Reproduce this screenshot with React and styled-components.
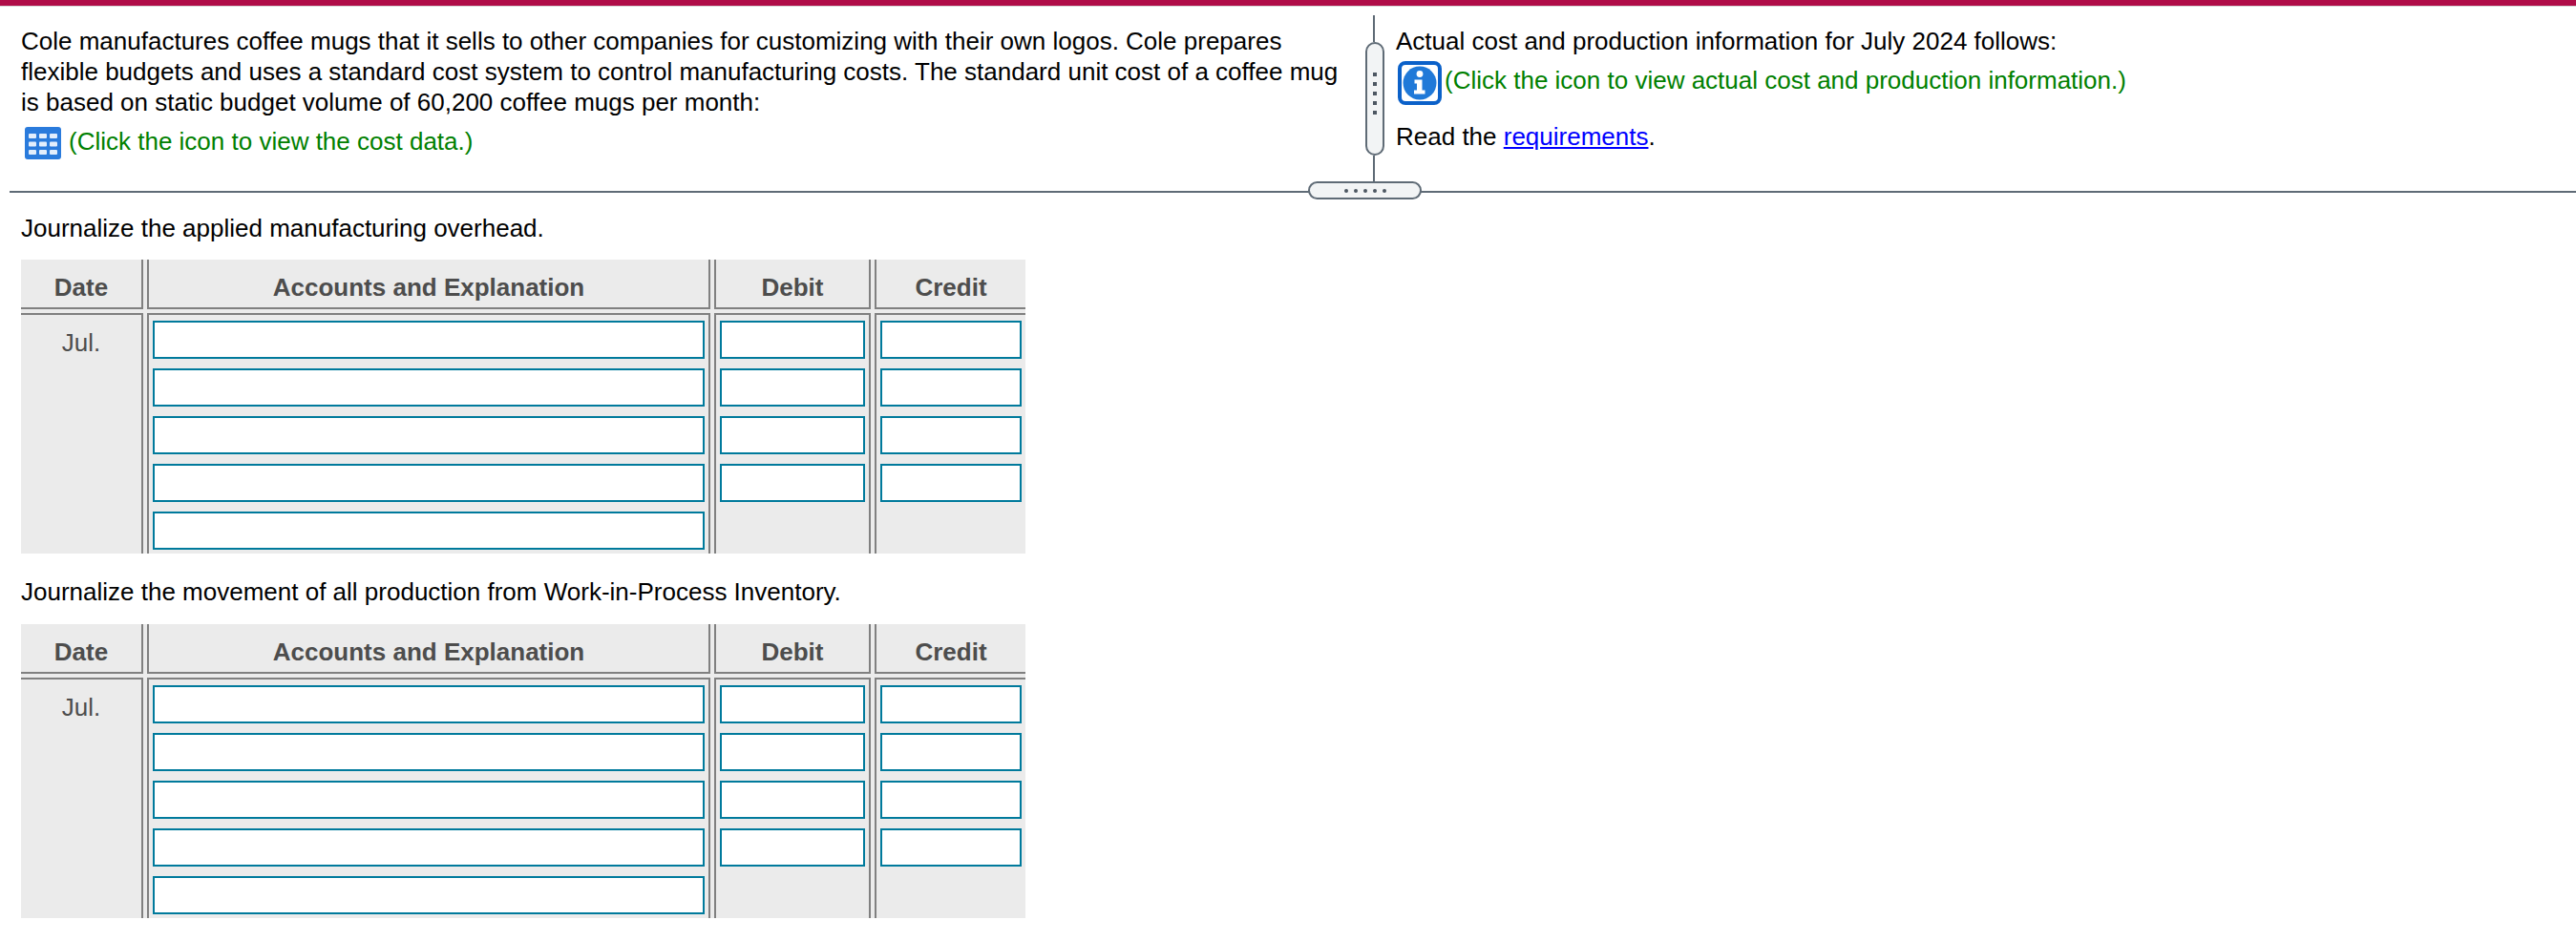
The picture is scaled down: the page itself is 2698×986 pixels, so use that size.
import React from "react";
import styled, { createGlobalStyle } from "styled-components";

const GlobalStyle = createGlobalStyle`
  html, body {
    margin: 0;
    padding: 0;
    background: #fff;
  }
  body {
    font-family: "Liberation Sans", Arial, sans-serif;
    font-size: 26px;
    line-height: 32px;
    color: #000;
  }
`;

const TopBar = styled.div`
  height: 6px;
  background: #b00d48;
  border-bottom: 1px solid #d8d8d8;
`;

const Split = styled.div`
  display: flex;
  height: 193px;
`;

const LeftPane = styled.div`
  width: 1429px;
  padding-left: 22px;
  box-sizing: border-box;
  flex: none;
`;

const LeftText = styled.p`
  margin: 20px 0 0;
  width: 1400px;
`;

const Note = styled.div`
  display: flex;
  align-items: flex-start;
  color: #008000;
`;

const CostNote = styled(Note)`
  margin-top: 9px;
  margin-left: 4px;
  gap: 8px;
`;

const NoteText = styled.span`
  padding-top: ${(p) => p.$top || 0}px;
`;

const IconSvg = styled.svg`
  flex: none;
  margin-top: ${(p) => p.$top || 0}px;
  filter: blur(0.4px);
`;

const Splitter = styled.div`
  flex: none;
  width: 22px;
  margin-right: 11px;
  padding-top: 9px;
  display: flex;
  flex-direction: column;
  align-items: center;
`;

const SplitLine = styled.div`
  width: 2px;
  height: ${(p) => p.$h}px;
  background: #5f6b76;
  margin-right: 2px;
`;

const SplitHandle = styled.div`
  width: 20px;
  height: 119px;
  box-sizing: border-box;
  border: 2px solid #5f6b76;
  border-radius: 10px;
  background: #f2f4f5;
  display: flex;
  flex-direction: column;
  align-items: center;
  gap: 6px;
  padding-top: 30px;
`;

const SquareDot = styled.span`
  width: 4px;
  height: 4px;
  background: #4d5762;
`;

const RightPane = styled.div`
  padding-top: 20px;
`;

const InfoNote = styled(Note)`
  margin-top: 5px;
  margin-left: 2px;
  gap: 3px;
`;

const ReadLine = styled.div`
  margin-top: 17px;
`;

const Link = styled.a`
  color: #0000ff;
  text-decoration: underline;
`;

const HRule = styled.div`
  position: relative;
  height: 2px;
  margin-left: 10px;
  background: #5f6b76;
`;

const RuleHandle = styled.div`
  position: absolute;
  left: 1360px;
  top: -10px;
  width: 119px;
  height: 19px;
  box-sizing: border-box;
  border: 2px solid #5f6b76;
  border-radius: 10px;
  background: #f2f4f5;
  display: flex;
  justify-content: center;
  align-items: center;
  gap: 6px;
`;

const RoundDot = styled.span`
  width: 4px;
  height: 4px;
  border-radius: 50%;
  background: #4d5762;
`;

const Section = styled.section`
  padding-left: 22px;
  width: 1052px;
`;

const Heading = styled.div`
  white-space: nowrap;
  margin: ${(p) => p.$top}px 0 ${(p) => p.$bottom}px;
`;

const Journal = styled.div`
  display: grid;
  grid-template-columns: 128px 590px 164px 158px;
  grid-template-rows: 52px 252px;
  gap: 4px;
  background: #ebebeb;
  color: #4d4d4d;
`;

const HeadCell = styled.div`
  box-sizing: border-box;
  border-bottom: 2px solid #808080;
  border-left: ${(p) => (p.$first ? 0 : 2)}px solid #808080;
  border-right: ${(p) => (p.$last ? 0 : 2)}px solid #808080;
  font-weight: bold;
  text-align: center;
  padding-top: 13px;
`;

const BodyCell = styled.div`
  box-sizing: border-box;
  border-top: 2px solid #808080;
  border-left: ${(p) => (p.$first ? 0 : 2)}px solid #808080;
  border-right: ${(p) => (p.$last ? 0 : 2)}px solid #808080;
  padding: 6px 4px 4px;
  display: flex;
  flex-direction: column;
  gap: 10px;
`;

const DateText = styled.div`
  text-align: center;
  padding-top: 7px;
`;

const EntryInput = styled.input`
  display: block;
  box-sizing: border-box;
  width: 100%;
  height: 40px;
  margin: 0;
  padding: 0 4px;
  border: 2px solid #007a9c;
  border-radius: 0;
  background: #fff;
  outline: none;
  font: inherit;
`;

function GridIcon() {
  const cells = [];
  [0, 1, 2].forEach((r) =>
    [0, 1, 2].forEach((c) =>
      cells.push(
        <rect key={r + "-" + c} x={4 + c * 11} y={7 + r * 8.5} width="8" height="5" rx="1" fill="#e3eefc" />
      )
    )
  );
  return (
    <IconSvg $top={1} width="38" height="34" viewBox="0 0 38 34">
      <rect width="38" height="34" rx="3" fill="#2a7bdc" />
      {cells}
    </IconSvg>
  );
}

function InfoIcon() {
  return (
    <IconSvg width="46" height="46" viewBox="0 0 46 46">
      <rect x="2" y="2" width="42" height="42" rx="6" fill="#fff" stroke="#0b61c9" strokeWidth="4" />
      <circle cx="23" cy="23" r="17.5" fill="#2079d8" />
      <circle cx="23" cy="13.5" r="3.4" fill="#fff" />
      <path d="M17.500 19.500h8v11h3v4h-11.500v-4h3v-7h-2.500z" fill="#fff" />
    </IconSvg>
  );
}

function JournalTable() {
  const rows = [0, 1, 2, 3];
  return (
    <Journal>
      <HeadCell $first>Date</HeadCell>
      <HeadCell>Accounts and Explanation</HeadCell>
      <HeadCell>Debit</HeadCell>
      <HeadCell $last>Credit</HeadCell>
      <BodyCell $first>
        <DateText>Jul.</DateText>
      </BodyCell>
      <BodyCell>
        {[...rows, 4].map((r) => (
          <EntryInput key={r} />
        ))}
      </BodyCell>
      <BodyCell>
        {rows.map((r) => (
          <EntryInput key={r} />
        ))}
      </BodyCell>
      <BodyCell $last>
        {rows.map((r) => (
          <EntryInput key={r} />
        ))}
      </BodyCell>
    </Journal>
  );
}

export default function App() {
  return (
    <>
      <GlobalStyle />
      <TopBar />
      <Split>
        <LeftPane>
          <LeftText>
            Cole manufactures coffee mugs that it sells to other companies for customizing with their own logos. Cole
            prepares flexible budgets and uses a standard cost system to control manufacturing costs. The standard unit
            cost of a coffee mug is based on static budget volume of 60,200 coffee mugs per month:
          </LeftText>
          <CostNote>
            <GridIcon />
            <NoteText>(Click the icon to view the cost data.)</NoteText>
          </CostNote>
        </LeftPane>
        <Splitter>
          <SplitLine $h={28} />
          <SplitHandle>
            <SquareDot />
            <SquareDot />
            <SquareDot />
            <SquareDot />
            <SquareDot />
          </SplitHandle>
          <SplitLine $h={27} />
        </Splitter>
        <RightPane>
          <div>Actual cost and production information for July 2024 follows:</div>
          <InfoNote>
            <InfoIcon />
            <NoteText $top={4}>(Click the icon to view actual cost and production information.)</NoteText>
          </InfoNote>
          <ReadLine>
            Read the <Link href="#">requirements</Link>.
          </ReadLine>
        </RightPane>
      </Split>
      <HRule>
        <RuleHandle>
          <RoundDot />
          <RoundDot />
          <RoundDot />
          <RoundDot />
          <RoundDot />
        </RuleHandle>
      </HRule>
      <Section>
        <Heading $top={21} $bottom={17}>
          Journalize the applied manufacturing overhead.
        </Heading>
        <JournalTable />
        <Heading $top={24} $bottom={18}>
          Journalize the movement of all production from Work-in-Process Inventory.
        </Heading>
        <JournalTable />
      </Section>
    </>
  );
}
